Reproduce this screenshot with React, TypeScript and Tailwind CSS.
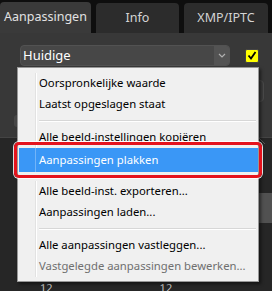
import React from 'react';

const font = { fontFamily: '"Noto Sans", "Open Sans", sans-serif' };

type Item = { label: string; disabled?: boolean; active?: boolean } | 'sep';

const items: Item[] = [
    { label: 'Oorspronkelijke waarde' },
    { label: 'Laatst opgeslagen staat' },
    'sep',
    { label: 'Alle beeld-instellingen kopiëren' },
    { label: 'Aanpassingen plakken', active: true },
    { label: 'Alle beeld-inst. exporteren...' },
    { label: 'Aanpassingen laden...' },
    'sep',
    { label: 'Alle aanpassingen vastleggen...' },
    { label: 'Vastgelegde aanpassingen bewerken...', disabled: true },
];

const MenuRow = ({ item }: { item: Item }) => {
    if (item === 'sep') {
        return (
            <div className="flex h-[12px]">
                <div className="w-[18px] border-r border-[#e2e2e2]" />
                <div className="flex-1 border-l border-white pl-[2px] pr-[2px] flex items-center">
                    <div className="w-full h-[2px] border-t border-[#d7d7d7] border-b border-b-white" />
                </div>
            </div>
        );
    }
    if (item.active) {
        return (
            <div className="flex h-[24px] ml-[1px] mb-[9px] bg-[#3a97f6] text-white">
                <div className="w-[17px] border-r border-[#72b4f8]" />
                <div className="flex-1 flex items-center pl-[3px] whitespace-nowrap">{item.label}</div>
            </div>
        );
    }
    return (
        <div className="flex h-[21px]">
            <div className="w-[18px] border-r border-[#e2e2e2]" />
            <div
                className={`flex-1 flex items-center border-l border-white pl-[2px] whitespace-nowrap ${item.disabled ? 'text-[#6f6f6f]' : 'text-black'}`}
            >
                {item.label}
            </div>
        </div>
    );
};

export default function App() {
    return (
        <div className="relative w-[272px] h-[291px] overflow-hidden bg-[#0e0e0e] flex flex-col" style={font}>
            {/* Tabs */}
            <div className="flex items-end gap-[5px] h-[33px] shrink-0">
                <div className="w-[91px] h-[31px] rounded-t-[4px] bg-[#3a3a3a] text-[#e2e2e2] text-[12.5px] flex items-center justify-center">
                    Aanpassingen
                </div>
                <div className="w-[83px] h-[30px] rounded-t-[4px] bg-[#2c2c2c] text-[#d4d4d4] text-[12.5px] flex items-center justify-center">
                    Info
                </div>
                <div className="w-[84px] h-[30px] rounded-t-[4px] bg-[#2c2c2c] text-[#d4d4d4] text-[12.5px] flex items-center justify-center">
                    XMP/IPTC
                </div>
            </div>

            {/* Panel */}
            <div className="h-[104px] shrink-0 bg-[#383838] pt-[12px] flex flex-col">
                <div className="flex items-center pl-[20px]">
                    <div className="w-[210px] h-[21px] rounded-[4px] bg-[#474747] border border-[#525252] flex items-stretch">
                        <div className="flex-1 flex items-center pl-[2px] text-white text-[13px]">Huidige</div>
                        <div className="w-[15px] bg-[#535353] rounded-r-[3px] flex items-center justify-center">
                            <svg width="8" height="5" viewBox="0 0 8 5">
                                <path d="M1 1 L4 4 L7 1" fill="none" stroke="#b0b0b0" strokeWidth="1.2" />
                            </svg>
                        </div>
                    </div>
                    <div className="ml-[15px] w-[14px] h-[14px] rounded-[2px] bg-[#ffff00] border border-[#444] flex items-center justify-center">
                        <svg width="10" height="9" viewBox="0 0 10 9">
                            <path d="M1.5 4.5 L4 7.5 L8.5 1" fill="none" stroke="#000" strokeWidth="1.8" />
                        </svg>
                    </div>
                </div>
                <div className="flex justify-between items-start mt-[14px]">
                    <div className="mt-[35px] ml-[14px] w-[6px] h-[12px] rounded-[3px] bg-[#474747]" />
                    <div className="w-[8px] h-[22px] mr-[8px] rounded-[4px] border border-[#4a4a4a] bg-[#3d3d3d]" />
                </div>
            </div>

            {/* Lower area */}
            <div className="flex-1 bg-[#262626] border-t border-[#444] flex flex-col">
                <div className="flex justify-end h-[8px]">
                    <svg width="10" height="8" viewBox="0 0 10 8" className="mr-[4px]">
                        <path d="M1 0 L7 6" fill="none" stroke="#555" strokeWidth="1" />
                    </svg>
                </div>
                <div className="flex justify-end mt-[47px]">
                    <div className="w-[14px] h-[30px] bg-[#515151]" />
                </div>
                <div className="flex gap-[107px] mt-[58px] pl-[40px] text-[11px] leading-[14px] text-[#c8c8c8]">
                    <span>12</span>
                    <span>12</span>
                </div>
            </div>

            {/* Context menu */}
            <div className="absolute left-[17px] top-[67px] w-[242px] h-[215px] bg-[#f0f0f0] border border-[#979797] shadow-[2px_2px_3px_rgba(0,0,0,0.5)] pt-[5px] text-[11.3px]">
                {items.map((item, i) => (
                    <MenuRow key={i} item={item} />
                ))}
            </div>

            {/* Red highlight frame */}
            <div className="absolute left-[14px] top-[142px] w-[248px] h-[36px] rounded-[5px] border-[3px] border-[#e5131d] shadow-[0_0_0_1px_rgba(255,255,255,0.85)]" />
        </div>
    );
}
